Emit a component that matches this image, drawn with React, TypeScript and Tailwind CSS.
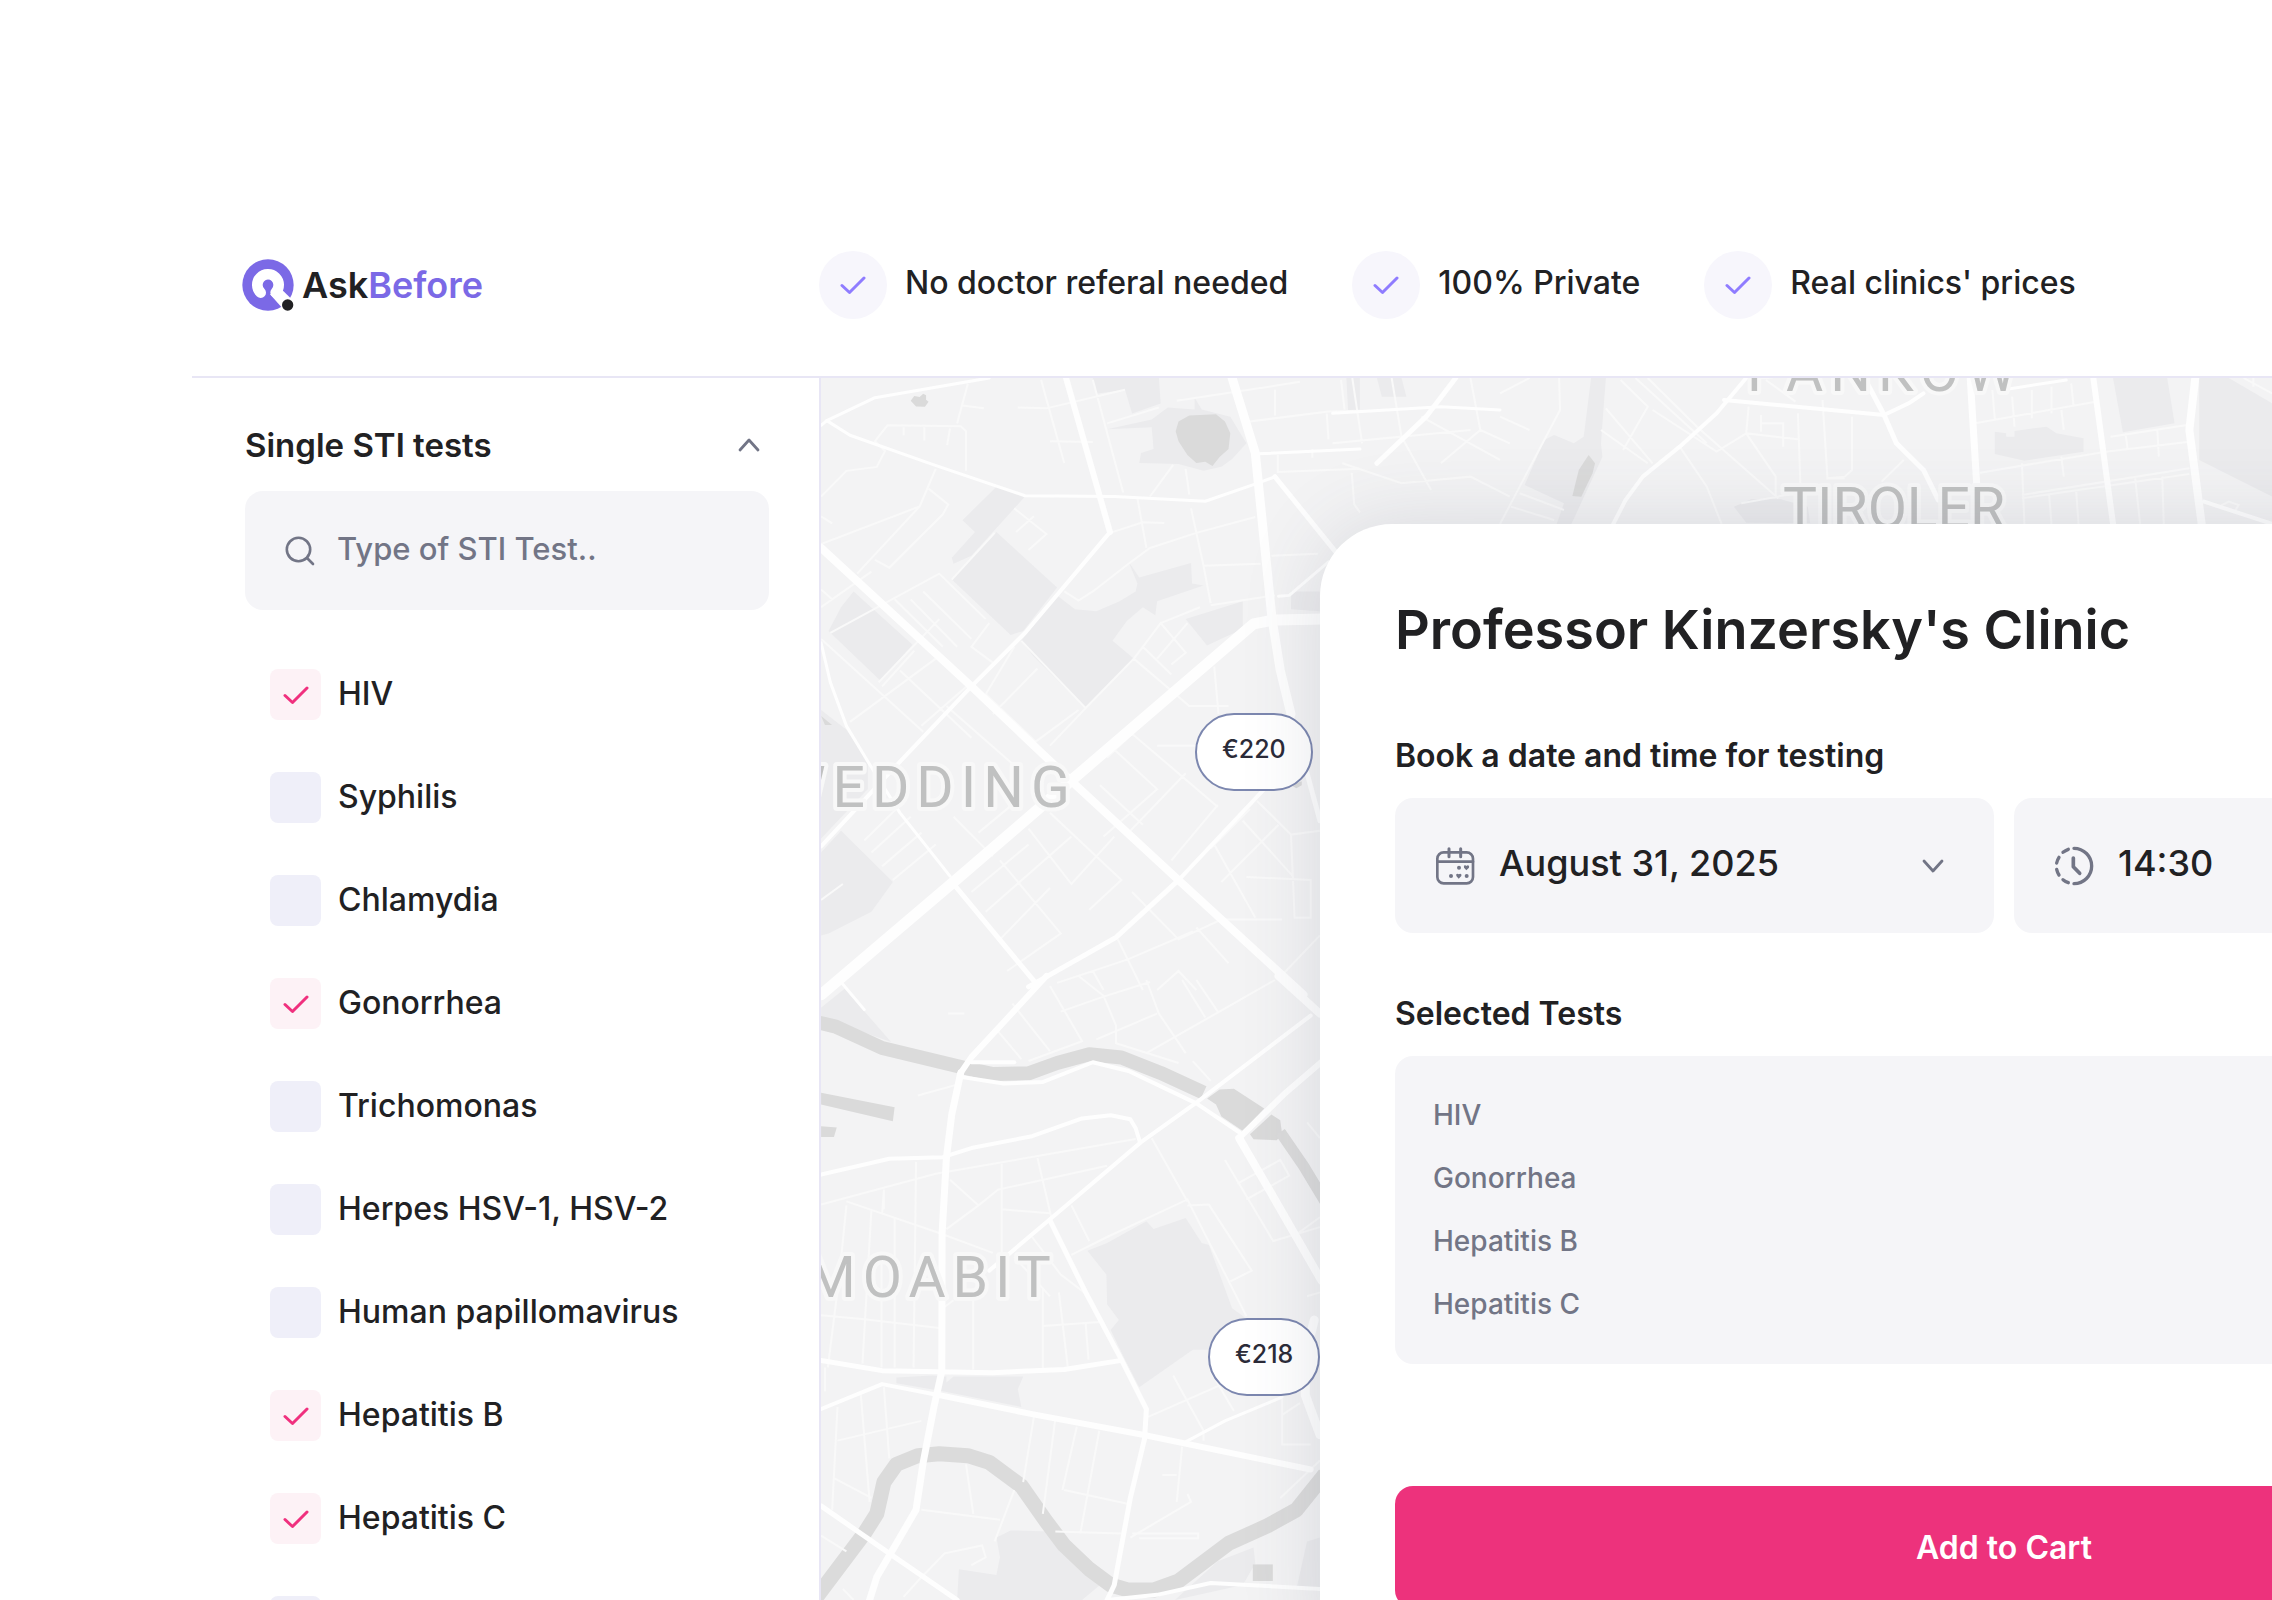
import { useState } from "react";
import type { ReactNode } from "react";

const PERKS = ["No doctor referal needed", "100% Private", "Real clinics' prices"];

const TESTS = [
  "HIV",
  "Syphilis",
  "Chlamydia",
  "Gonorrhea",
  "Trichomonas",
  "Herpes HSV-1, HSV-2",
  "Human papillomavirus",
  "Hepatitis B",
  "Hepatitis C",
  "Mycoplasma",
];

// Map tiles: every tile has its own grid, placed on the map by `transform`.
type Road = [width: number, points: string];
type Tile = {
  transform: string;
  parks: string[];
  water: string[];
  rivers: Road[];
  roads: Road[];
  streets: string;
};

const TILES: Tile[] = [
  {
    transform: "translate(800 370) scale(0.3571 0.3954)",
    parks: [
      "550,295 630,320 480,470 430,490 425,475 490,410 455,380",
      "550,410 720,550 625,660 590,670 425,530",
      "150,560 315,695 225,785 80,660 115,600",
      "720,570 770,605 830,610 895,585 940,560 945,540 920,485 950,525 1095,488 1098,540 1130,545 1000,585 995,620 960,600 915,635 875,685 935,730 800,855 655,725 620,685",
      "1080,630 1240,585 1240,655 1180,680 1140,697",
      "860,150 985,125 1030,95 1105,100 1105,70 1125,100 1205,118 1250,185 1210,225 1180,245 1130,255 1060,238 950,235 955,210 990,200 985,145",
      "820,20 1005,20 1010,85 930,110 910,50 830,60",
      "115,1165 260,1295 200,1370 80,1425 59,1430 59,1220",
      "59,860 130,910 190,990 190,1060 59,1185",
      "1375,560 1456,560 1456,610 1375,605",
      "1530,20 1568,20 1568,105 1535,105",
    ],
    water: [
      "1060,130 1090,115 1165,112 1190,130 1205,160 1200,200 1175,220 1155,243 1135,232 1110,235 1085,215 1060,180 1052,155",
      "310,78 320,66 335,68 345,60 353,64 353,75 360,80 350,93 325,92",
      "59,875 90,898 70,898",
      "1375,1050 1405,1040 1405,1050 1390,1058",
    ],
    rivers: [],
    roads: [
      [8, "59,450 480,800 760,1040 1060,1290 1410,1580"],
      [11, "59,1580 430,1295 770,1030 1270,642 1330,632 1470,630"],
      [6, "745,20 868,410"],
      [4, "868,410 630,665 480,800 270,1000 59,1205"],
      [9, "1210,20 1275,210 1322,630 1345,760 1375,870"],
      [5, "1375,870 1456,1140"],
      [3, "59,140 75,128 210,70 530,20"],
      [3, "75,128 140,165 375,240 630,318 880,320 1135,332 1270,290 1330,270"],
      [5, "1330,270 1500,460"],
      [3, "1285,212 1568,200"],
      [3, "59,690 85,790 130,900 190,990 280,1120 420,1280"],
      [5, "430,1300 655,1545"],
      [5, "640,1560 885,1435 1060,1290"],
      [4, "1060,1290 1300,1060"],
      [3, "1340,572 1370,570 1480,485"],
    ],
    streets:
      "M59 320L130 255L215 245L238 205L210 180L245 140L450 142L465 155V255 M470 35L440 135 M455 90L515 97 M290 145V165 M348 145V178 M420 148L412 190 M59 440L335 345L380 250 M59 370L90 388 M160 515L335 345 M360 300L415 340L400 365L250 500L210 480 M675 25L740 235 M820 25L905 310 M610 95L690 97L910 50 M700 180L820 182 M860 135L1005 95 M945 325L970 450 M875 410L960 385L1020 387 M740 560L780 583L820 560L920 490L980 450L1110 412L1275 372 M1095 350L1130 495L1150 590 M1130 495L1290 490 M1320 470L1450 465 M1150 595L1330 570 M1080 250L1090 315 M1045 240L980 320 M1260 130L1480 105L1568 103 M1330 50V115 M1475 110L1480 175 M1338 215V258L1568 250 M1055 78L1400 30 M1515 25L1525 100 M1435 200V222 M1545 260L1552 340L1568 360 M425 530L545 412 M600 350L690 415L640 455 M655 370L605 410 M59 600L200 510 M85 665L390 515L520 630 M265 580L400 700 M310 580L440 700 M345 560L480 680 M59 680L345 915 M230 800L320 710 M59 555L90 580 M280 760L480 930 M220 790L390 630 M380 730L140 890 M340 900L480 790 M410 850L600 1000 M540 740L480 700L530 640 M620 685L800 855L935 730L1090 850H1200 M800 855L700 950 M600 700L520 820L660 940L780 860 M665 755L540 870 M935 730L1010 640L1080 715L1040 745 M1010 640L1120 600 M960 700L1040 770 M1160 750L1172 870 M1085 640L1000 730 M860 980L930 920L1170 1105 M1000 950H1140 M880 960L1000 1060L850 1180 M1170 1100L1040 1240 M1080 1020L920 1170 M840 1050L960 1150 M640 1160L760 1300L880 1180 M700 1120L900 1290L810 1365 M500 1170L620 1080 M560 1240L730 1425L580 1520 M520 1370L760 1180 M480 1320L640 1200 M560 1440L700 1310 M430 1130L540 1230 M180 1190L270 1110 M200 1220L310 1130 M230 1255L340 1170 M260 1290L380 1200 M59 1340L120 1300 M930 1320L1060 1440L1180 1390H1350 M1110 1410L1200 1500 M1160 1200L1275 1385 M1280 1090L1375 1175L1456 1165 M1375 1175L1385 1385H1430V1290L1250 1282 M1150 1210L1260 1110 M1180 1295L1340 1150 M1240 1140L1380 1280 M720 1550L920 1490L1100 1420 M890 1440L960 1568 M820 1520L850 1568 M1000 1568L1060 1520L1110 1568 M1350 1530L1456 1430",
  },
  {
    transform: "translate(800 980) scale(0.3571 0.3954)",
    parks: [
      "805,685 860,665 970,610 990,630 1080,602 1125,665 1145,670 1210,830 1240,850 1300,900 1140,935 1100,935 950,1030 910,960 870,885 893,860 860,820 858,745",
      "59,70 125,22 255,157 59,95",
      "270,1005 370,1000 410,1003 410,1018 430,1003 625,1003 610,1035 620,1080 400,1040 270,1020",
      "550,1410 590,1392 700,1395 840,1530 790,1568 440,1568 445,1490 550,1505 560,1460",
      "1050,1568 1170,1470 1270,1435 1275,1475 1240,1530",
      "1390,1540 1420,1420 1456,1410 1456,1545",
    ],
    water: [
      "1140,300 1175,277 1215,275 1300,325 1240,382 1180,345 1165,315",
      "1260,390 1320,340 1345,355 1350,390 1335,405 1270,403",
      "59,285 265,322 260,357 59,315",
      "59,370 103,373 95,397 59,397",
      "1268,1478 1324,1478 1324,1520 1268,1520",
    ],
    rivers: [
      [14, "40,105 100,118 230,172 460,222 540,238 640,236 720,210 810,188 900,196 1010,235 1130,285"],
      [11, "1345,385 1410,470 1470,560"],
      [15, "40,1568 180,1400 215,1350 235,1270 270,1225 330,1203 390,1198 470,1203 530,1220 620,1280 690,1370 740,1430 810,1490 870,1530 920,1543 990,1543 1060,1520 1200,1425 1310,1380 1390,1340 1470,1250"],
    ],
    roads: [
      [6, "690,-10 480,195 450,235"],
      [7, "450,235 425,340 410,450 398,640 397,990 375,1080 345,1220 325,1340 215,1510 195,1568"],
      [4, "59,492 250,452 400,448 480,425 650,395 790,350 870,342 925,352 940,375 952,410"],
      [4, "530,735 700,605 955,410 1110,310 1430,90"],
      [4, "450,245 570,262 680,258 820,208 920,230 1110,312 1230,385"],
      [8, "1230,400 1320,540 1460,760"],
      [6, "1235,395 1360,285 1470,200"],
      [5, "700,608 800,790 900,960 970,1085 965,1160 925,1310 880,1530 860,1568"],
      [5, "59,962 230,988 540,993 740,985 900,962"],
      [4, "59,1085 230,1022 390,1050"],
      [6, "390,1050 650,1098 960,1150 1430,1238"],
      [5, "59,1330 250,1450 440,1568"],
      [3, "1080,1168 1190,1115 1350,1055"],
      [4, "860,1568 1000,1555 1150,1525 1456,1540"],
      [8, "1340,-10 1456,85"],
      [3, "110,0 180,75"],
      [4, "480,208 600,208"],
      [9, "1440,860 1415,950 1415,1050 1456,1150"],
    ],
    streets:
      "M330 292L450 262 M59 568L380 490L940 402 M130 560L390 640L540 690 M235 530V580 M325 460L318 980 M235 530L230 590 M265 600V980 M130 570L110 750L78 980 M200 580L175 970 M420 505L500 570L555 530L860 470 M410 630L500 570 M565 465V690 M665 450L705 605 M565 580L700 590 M760 570L810 660 M760 695L860 650L1085 555L1250 850 M1085 570L1145 568L1265 735L1205 762 M985 400L1085 560 M1190 455L1325 660L1456 625 M1225 515L1345 455L1370 495L1250 555 M1380 650L1456 600 M650 650L730 745L810 800 M600 700L700 800 M59 848L180 858L390 880 M228 700V980 M400 830L430 810 M485 800V985 M680 780V985 M725 790L750 980 M680 875L840 865 M800 870L808 960 M975 1105L1340 960 M1045 1000L1130 1140V1165 M1150 990L1215 1090 M1350 1060V1175H1430 M1350 1100L1400 1070 M70 980V1040 M105 1080L90 1340 M170 1045L195 1320 M235 1030L250 1210 M105 1165L340 1115 M95 1260L200 1310 M655 1105L625 1270 M715 1110L680 1350 M775 1130L735 1290 M838 1140L785 1400 M740 1290L920 1325 M715 1395L900 1400 M1070 1180L1055 1320 M1015 1252H1055 M925 1410L1095 1320L1085 1300 M950 1412H1115V1400H930 M340 1340L560 1365 M465 1225L485 1350 M600 1290L545 1420 M59 1405L130 1445 M330 1520L405 1450L510 1430L520 1460L480 1480 M290 1560L350 1500 M120 1540L150 1568 M595 60L700 180 M550 125L620 200 M700 15L790 155L640 205 M780 -10L850 40L885 115V160L1060 210 M730 80L850 42L980 5 M970 0L1005 85L1080 185 M830 150L1000 85 M970 185L1330 0 M1070 0L1135 95 M1110 0L1170 80 M1100 205L1150 255 M1345 1310L1456 1215 M415 85H460 M1420 360L1456 400 M1420 800L1456 790",
  },
  {
    transform: "translate(1500 230) scale(0.4924 0.3333)",
    parks: [
      "1005,605 1028,610 1028,620 1045,620 1045,603 1110,590 1130,610 1185,625 1185,665 1065,692 1005,672",
      "1245,444 1355,444 1370,580 1265,607",
      "1420,444 1480,444 1568,520 1568,800 1420,690",
      "185,444 215,444 205,640 208,680 145,882 115,882 130,820 50,765 90,630 110,615 150,640 170,620",
      "475,830 510,808 570,808 625,830 630,880 500,878",
      "-250,444 -200,444 -190,500 -240,500",
    ],
    water: ["180,675 193,700 188,730 165,800 147,798 160,720"],
    rivers: [],
    roads: [
      [4, "500,444 440,550 365,650 290,740 255,810 230,882"],
      [4, "455,510 780,555 830,520 860,490"],
      [5, "740,444 780,555 805,640 860,720 890,810"],
      [7, "955,444 968,760"],
      [6, "1205,444 1245,882"],
      [8, "1412,444 1400,600 1425,882"],
      [3, "1020,480 1150,450"],
      [4, "1430,815 1568,882"],
      [3, "-340,550 -120,530 0,540"],
      [5, "-90,444 -150,560 -250,700"],
    ],
    streets:
      "M0 490L60 444 M120 444L122 540L40 770L0 882 M22 830L110 870 M40 790L130 840 M245 450L300 530L250 660 M215 535L310 700 M310 540L440 665L500 610 M300 444L400 590L565 805 M275 444L420 640 M365 650L420 770L450 882 M205 600L300 700 M500 610L560 740V800 M505 530L500 610L605 628 M530 555V605 M530 580H575V650 M605 550L610 760 M655 510L665 745L700 740L715 720V560 M665 745H700 M775 755L820 690 M540 450L600 515 M490 820L600 790 M965 580L1210 515 M975 728L1230 665L1400 635 M1060 795L1400 715 M1060 805L1400 732 M1240 620L1395 585 M1270 610L1275 660 M1335 600L1338 680 M1060 700L1065 882 M1115 790L1120 882 M1170 780L1175 882 M1290 745L1300 882 M1345 740L1348 882 M1040 500L1045 590 M1080 480V565 M1120 470V550 M1140 540L1145 600 M1160 460L1165 530 M1000 480L1005 570 M1140 680L1145 740 M1460 830L1480 815L1500 825L1490 850 M1510 444L1568 490 M1530 444V470 M-300 444L-280 640 M-220 444L-200 620L-60 600 M-340 640L-200 620L-140 780 M-60 444L-40 600L20 640 M-160 560L0 690 M-120 700L-40 600 M-320 700L-200 760L-60 740L20 800 M0 560L60 600",
  },
];

const MAP_LABELS = [
  { name: "WEDDING", x: 775, y: 807, tracking: "tracking-[7px]" },
  { name: "MOABIT", x: 806, y: 1297, tracking: "tracking-[7px]" },
  { name: "TIROLER", x: 1783, y: 528, tracking: "tracking-normal" },
  { name: "PANKOW", x: 1747, y: 391, tracking: "tracking-[7px]" },
];

function CityMap() {
  return (
    <svg
      aria-hidden="true"
      viewBox="821 378 1451 1222"
      preserveAspectRatio="xMinYMin slice"
      className="absolute inset-0 h-full w-full"
    >
      {TILES.map((tile) => (
        <g key={tile.transform} transform={tile.transform} fill="none" stroke="none">
          {tile.parks.map((points) => (
            <polygon key={points} points={points} fill="#ebebed" />
          ))}
          {tile.water.map((points) => (
            <polygon key={points} points={points} fill="#dadada" />
          ))}
          {tile.rivers.map(([width, points]) => (
            <polyline
              key={points}
              points={points}
              stroke="#dbdbdb"
              strokeWidth={width}
              strokeLinejoin="round"
              vectorEffect="non-scaling-stroke"
            />
          ))}
          <path d={tile.streets} stroke="#f9f9f9" strokeWidth={2} vectorEffect="non-scaling-stroke" />
          {tile.roads.map(([width, points]) => (
            <polyline
              key={points}
              points={points}
              stroke="#fefefe"
              strokeWidth={width}
              strokeLinejoin="round"
              strokeLinecap="round"
              vectorEffect="non-scaling-stroke"
            />
          ))}
        </g>
      ))}
      {MAP_LABELS.map((label) => (
        <text
          key={label.name}
          x={label.x}
          y={label.y}
          className={`font-['Roboto',sans-serif] text-[57px] ${label.tracking}`}
          fill="#c0c1c1"
          stroke="#f8f8f8"
          strokeWidth={8}
          strokeLinejoin="round"
          paintOrder="stroke"
        >
          {label.name}
        </text>
      ))}
    </svg>
  );
}

function LogoMark() {
  return (
    <svg viewBox="0 0 156 156" className="size-[52px]" aria-hidden="true">
      <circle cx="78" cy="78" r="77" fill="#7b69e6" />
      <path d="M56 101A32 32 0 1 1 101 100" fill="none" stroke="#fff" strokeWidth="32" strokeLinecap="round" />
      <path d="M84 106L120 146L146 118L120 92Z" fill="#fff" />
      <circle cx="137" cy="138" r="17" fill="#212123" />
    </svg>
  );
}

function CheckIcon({ className }: { className: string }) {
  return (
    <svg
      viewBox="0 0 26 20"
      className={className}
      fill="none"
      stroke="currentColor"
      strokeWidth="3"
      strokeLinecap="round"
      strokeLinejoin="round"
      aria-hidden="true"
    >
      <path d="M2 10.5L9.5 17.5L24 3" />
    </svg>
  );
}

function Chevron({ className = "" }: { className?: string }) {
  return (
    <svg
      viewBox="0 0 22 14"
      className={`h-3.5 w-[22px] shrink-0 text-[#727586] ${className}`}
      fill="none"
      stroke="currentColor"
      strokeWidth="2.8"
      strokeLinecap="round"
      strokeLinejoin="round"
      aria-hidden="true"
    >
      <path d="M2 2L11 12L20 2" />
    </svg>
  );
}

function SearchIcon() {
  return (
    <svg viewBox="0 0 30 30" className="size-[30px] shrink-0" fill="none" stroke="#727586" strokeWidth="2.6" strokeLinecap="round" aria-hidden="true">
      <circle cx="13.5" cy="13.5" r="11.7" />
      <path d="M22.5 22.5L28 28" />
    </svg>
  );
}

function CalendarIcon() {
  return (
    <svg viewBox="0 0 120 120" className="size-10 shrink-0" fill="none" stroke="#727586" strokeWidth="8" strokeLinecap="round" aria-hidden="true">
      <rect x="7" y="19" width="107" height="93" rx="19" />
      <path d="M7 47H114" />
      <path d="M42 8V32M77 8V32" strokeWidth="9" />
      <g fill="#727586" stroke="none">
        <circle cx="72" cy="65" r="6" />
        <circle cx="48" cy="90" r="6" />
        <circle cx="95" cy="90" r="6" />
        <path d="M94 73L87 65Q85 58 90 58Q93 58 94 60Q96 58 99 58Q104 59 102 65Z" />
        <path d="M71 98L64 90Q62 83 67 83Q70 83 71 85Q73 83 76 83Q81 84 79 90Z" />
      </g>
    </svg>
  );
}

function ClockIcon() {
  return (
    <svg viewBox="0 0 120 120" className="size-10 shrink-0" fill="none" stroke="#727586" strokeWidth="10" strokeLinecap="round" strokeLinejoin="round" aria-hidden="true">
      <path d="M60 7A53 53 0 0 1 60 113" />
      <path d="M43 10A53 53 0 0 0 27 19" />
      <path d="M15 34A53 53 0 0 0 8 51" />
      <path d="M8 70A53 53 0 0 0 15 87" />
      <path d="M27 101A53 53 0 0 0 43 110" />
      <path d="M58 36V62L77 82" strokeWidth="11" />
    </svg>
  );
}

type PickerProps = { icon: ReactNode; label: string; options: string[] };

function Picker({ icon, label, options }: PickerProps) {
  return (
    <div className="flex h-[135px] items-center gap-6 rounded-[18px] bg-[#f5f5f8] pr-[50px] pl-10">
      {icon}
      <select
        aria-label={label}
        className="min-w-0 flex-1 appearance-none bg-transparent pb-1.5 text-[36px] leading-[48px] font-medium outline-none"
      >
        {options.map((option) => (
          <option key={option}>{option}</option>
        ))}
      </select>
      <Chevron />
    </div>
  );
}

function PricePin({ price, className }: { price: string; className: string }) {
  return (
    <button
      type="button"
      className={`absolute h-[78px] rounded-full border-2 border-[#7c87af] bg-white px-[25px] pb-1 text-[25px] font-medium text-[#2b2b38] ${className}`}
    >
      {price}
    </button>
  );
}

export default function App() {
  const [open, setOpen] = useState(true);
  const [query, setQuery] = useState("");
  const [selected, setSelected] = useState(["HIV", "Gonorrhea", "Hepatitis B", "Hepatitis C"]);

  const toggle = (name: string) =>
    setSelected((prev) => (prev.includes(name) ? prev.filter((item) => item !== name) : [...prev, name]));

  const visible = TESTS.filter((name) => name.toLowerCase().includes(query.toLowerCase()));

  return (
    <div className="flex h-screen flex-col overflow-hidden bg-white pt-48 pl-48 font-['Inter',sans-serif] text-[#212123]">
      <header className="flex h-[186px] shrink-0 items-center border-b-2 border-[#e8e6f5] pt-0.5">
        <a href="#home" className="flex w-[627px] shrink-0 items-center gap-2 pl-[50px]">
          <LogoMark />
          <span className="text-[36px] leading-10 font-semibold">
            Ask<span className="text-[#7b69e6]">Before</span>
          </span>
        </a>
        <ul className="flex items-center gap-16">
          {PERKS.map((perk) => (
            <li key={perk} className="flex shrink-0 items-center gap-[18px]">
              <span className="flex size-[68px] items-center justify-center rounded-full bg-[#f7f6fc]">
                <CheckIcon className="h-5 w-[26px] text-[#8f7cff]" />
              </span>
              <span className="pb-1 text-[32px] leading-10 font-medium whitespace-nowrap">{perk}</span>
            </li>
          ))}
        </ul>
      </header>

      <div className="flex min-h-0 flex-1">
        <aside className="w-[629px] shrink-0 overflow-hidden border-r-2 border-[#e8e6f5] pt-[47px] pr-[50px] pl-[53px]">
          <h2>
            <button
              type="button"
              aria-expanded={open}
              onClick={() => setOpen(!open)}
              className="flex w-full items-center justify-between pr-[9px] text-[33px] leading-10 font-semibold"
            >
              Single STI tests
              <Chevron className={open ? "rotate-180" : ""} />
            </button>
          </h2>
          {open && (
            <>
              <label className="mt-[26px] flex h-[119px] items-center gap-[22px] rounded-[18px] bg-[#f5f5f8] px-10">
                <SearchIcon />
                <input
                  type="text"
                  aria-label="Type of STI Test"
                  placeholder="Type of STI Test.."
                  value={query}
                  onChange={(e) => setQuery(e.target.value)}
                  className="min-w-0 flex-1 bg-transparent pb-1 text-[31px] leading-10 font-medium outline-none placeholder:text-[#727586]"
                />
              </label>
              <ul className="mt-[59px] flex flex-col gap-[52px] pl-[25px]">
                {visible.map((name) => (
                  <li key={name}>
                    <label className="flex items-center gap-[17px]">
                      <span className="grid size-[51px] shrink-0">
                        <input
                          type="checkbox"
                          checked={selected.includes(name)}
                          onChange={() => toggle(name)}
                          className="peer col-start-1 row-start-1 size-full appearance-none rounded-lg bg-[#efeff9] checked:bg-[#fdf2f6]"
                        />
                        <CheckIcon className="pointer-events-none col-start-1 row-start-1 hidden h-5 w-[26px] place-self-center text-[#f0307e] peer-checked:block" />
                      </span>
                      <span className="pb-0.5 text-[32px] leading-10 font-medium">{name}</span>
                    </label>
                  </li>
                ))}
              </ul>
            </>
          )}
        </aside>

        <main className="relative min-w-0 flex-1 overflow-hidden bg-[#f3f3f4] pt-[146px] pl-[499px]">
          <CityMap />
          <PricePin price="€220" className="top-[335px] left-[374px]" />
          <PricePin price="€218" className="top-[940px] left-[387px]" />

          {/* booking card, runs off the right edge of the map */}
          <section className="relative w-[1368px] rounded-[72px] bg-white px-[75px] pt-[72px] pb-20 shadow-[0_0_80px_rgba(70,72,100,0.15)]">
            <h1 className="text-[54px] leading-[68px] font-semibold">Professor Kinzersky's Clinic</h1>

            <h2 className="mt-[72px] text-[32px] leading-10 font-semibold">Book a date and time for testing</h2>
            <div className="mt-[22px] grid grid-cols-2 gap-5">
              <Picker icon={<CalendarIcon />} label="Date" options={["August 31, 2025", "September 1, 2025"]} />
              <Picker icon={<ClockIcon />} label="Time" options={["14:30", "15:00", "15:30"]} />
            </div>

            <h2 className="mt-[61px] text-[32px] leading-10 font-semibold">Selected Tests</h2>
            <ul className="mt-[22px] rounded-[18px] bg-[#f5f5f8] px-[38px] py-7 text-[28px] leading-[63px] font-medium text-[#727586]">
              {TESTS.filter((name) => selected.includes(name)).map((name) => (
                <li key={name}>{name}</li>
              ))}
            </ul>

            <button
              type="button"
              className="mt-[122px] h-[122px] w-full rounded-[18px] bg-[#ed327c] pt-0.5 text-[32px] font-semibold text-white"
            >
              Add to Cart
            </button>
          </section>
        </main>
      </div>
    </div>
  );
}
